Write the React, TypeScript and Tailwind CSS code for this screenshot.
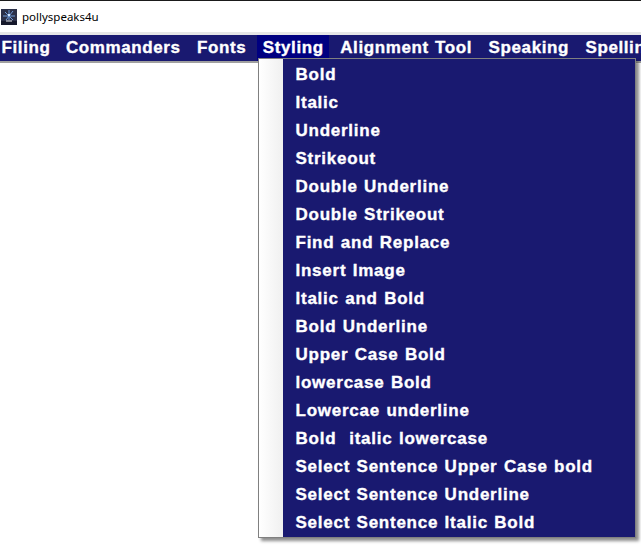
const menus = [
  { label: "Filing", active: false },
  { label: "Commanders", active: false },
  { label: "Fonts", active: false },
  { label: "Styling", active: true },
  { label: "Alignment Tool", active: false },
  { label: "Speaking", active: false },
  { label: "Spelling", active: false },
];

const items = [
  "Bold",
  "Italic",
  "Underline",
  "Strikeout",
  "Double Underline",
  "Double Strikeout",
  "Find and Replace",
  "Insert Image",
  "Italic and Bold",
  "Bold Underline",
  "Upper Case Bold",
  "lowercase Bold",
  "Lowercae underline",
  "Bold  italic lowercase",
  "Select Sentence Upper Case bold",
  "Select Sentence Underline",
  "Select Sentence Italic Bold",
];

function AppIcon() {
  return (
    <svg width="16" height="16" viewBox="0 0 16 16" className="shrink-0">
      <rect width="16" height="16" fill="#2b3048" />
      <rect y="12" width="16" height="4" fill="#15182a" />
      <path d="M4 3l8 8M12 2l-7 9M2 7h12M8 1v10" stroke="#6f9bd8" strokeWidth="1" />
      <path d="M5 12h6" stroke="#e5e7eb" strokeWidth="1" />
      <rect x="7" y="5" width="2" height="2" fill="#cfe4ff" />
    </svg>
  );
}

export default function App() {
  return (
    <div className="relative h-[551px] w-[641px] overflow-hidden bg-white font-['Liberation_Sans',Arial,sans-serif]">
      <div className="h-px bg-[#1a1a1a]" />
      {/* Title bar */}
      <div className="flex h-[31px] items-center gap-[5px] pl-px">
        <AppIcon />
        <span className="font-['Noto_Sans',sans-serif] text-[11.5px] text-black">pollyspeaks4u</span>
      </div>
      <div className="h-[3px] bg-[#e6e6e6]" />

      {/* Menu bar */}
      <div className="flex h-[26px] gap-[5.5px] overflow-hidden whitespace-nowrap bg-[#191970] text-[17px] font-bold leading-[25px] tracking-[0.6px] text-white [-webkit-text-stroke:0.35px_white] [word-spacing:1px]">
        {menus.map((m, i) => (
          <div key={m.label} className={(m.active ? "bg-[#000080] " : "") + (i === 0 ? "pl-[1.5px] pr-[4.5px]" : "px-[5.5px]")}>
            {m.label}
          </div>
        ))}
      </div>
      <div className="h-[2px] bg-[#a0a0a0]" />

      {/* Dropdown */}
      <div className="absolute left-[258px] top-[58px] flex h-[480px] w-[378px] border border-[#808080] bg-[#191970] shadow-[3px_3px_3px_rgba(0,0,0,0.45)]">
        <div className="w-[24px] bg-gradient-to-r from-white to-[#f0f0f0]" />
        <div className="flex-1 pt-[2px]">
          {items.map((t) => (
            <div key={t} className="h-[28px] whitespace-pre pl-[12.5px] text-[17px] font-bold leading-[28px] tracking-[0.75px] text-white [-webkit-text-stroke:0.35px_white] [word-spacing:1px]">
              {t}
            </div>
          ))}
        </div>
      </div>
    </div>
  );
}
